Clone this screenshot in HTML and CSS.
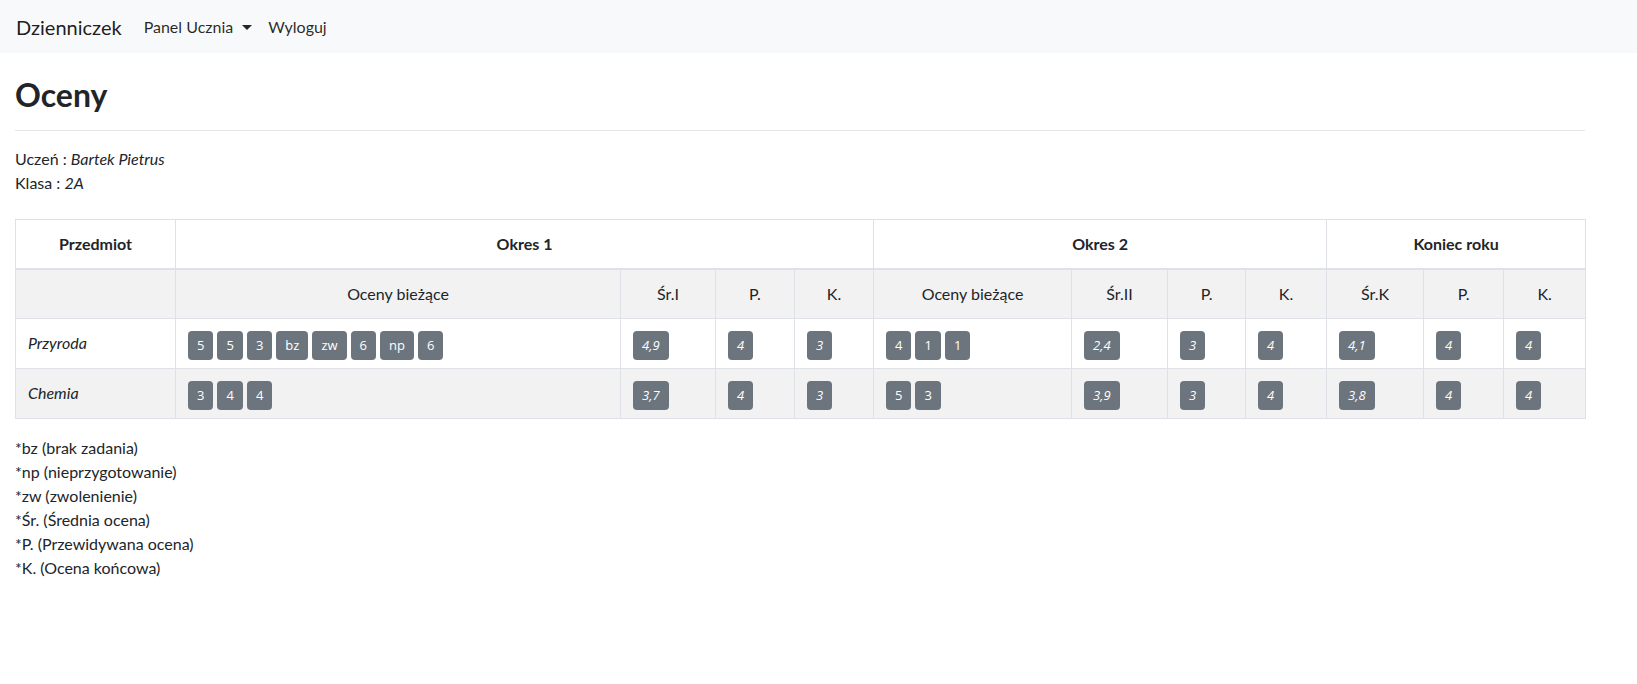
FILE: index.html
```html
<!DOCTYPE html>
<html lang="pl">
<head>
<meta charset="utf-8">
<title>Dzienniczek</title>
<link rel="stylesheet" href="styles.css">
</head>
<body>
<nav class="navbar">
  <a class="brand" href="#">Dzienniczek</a>
  <ul class="nav">
    <li><a class="nav-link dropdown-toggle" href="#">Panel Ucznia</a></li>
    <li><a class="nav-link" href="#">Wyloguj</a></li>
  </ul>
</nav>
<main class="content">
  <h2 class="title">Oceny</h2>
  <hr class="rule">
  <p class="info">Uczeń : <em>Bartek Pietrus</em><br>Klasa : <em>2A</em></p>
  <table class="grades">
    <colgroup>
      <col class="c-subj"><col class="c-cur1"><col class="c-avg1"><col class="c-p1"><col class="c-k1">
      <col class="c-cur2"><col class="c-avg2"><col class="c-p2"><col class="c-k2">
      <col class="c-avgk"><col class="c-pk"><col class="c-kk">
    </colgroup>
    <thead>
      <tr>
        <th>Przedmiot</th>
        <th colspan="4">Okres 1</th>
        <th colspan="4">Okres 2</th>
        <th colspan="3">Koniec roku</th>
      </tr>
    </thead>
    <tbody>
      <tr class="sub">
        <td></td>
        <td>Oceny bieżące</td><td>Śr.I</td><td>P.</td><td>K.</td>
        <td>Oceny bieżące</td><td>Śr.II</td><td>P.</td><td>K.</td>
        <td>Śr.K</td><td>P.</td><td>K.</td>
      </tr>
      <tr>
        <td class="subject">Przyroda</td>
        <td><div class="badges"><span class="badge">5</span><span class="badge">5</span><span class="badge">3</span><span class="badge">bz</span><span class="badge">zw</span><span class="badge">6</span><span class="badge">np</span><span class="badge">6</span></div></td>
        <td><span class="badge it">4,9</span></td>
        <td><span class="badge it">4</span></td>
        <td><span class="badge it">3</span></td>
        <td><div class="badges"><span class="badge">4</span><span class="badge">1</span><span class="badge">1</span></div></td>
        <td><span class="badge it">2,4</span></td>
        <td><span class="badge it">3</span></td>
        <td><span class="badge it">4</span></td>
        <td><span class="badge it">4,1</span></td>
        <td><span class="badge it">4</span></td>
        <td><span class="badge it">4</span></td>
      </tr>
      <tr>
        <td class="subject">Chemia</td>
        <td><div class="badges"><span class="badge">3</span><span class="badge">4</span><span class="badge">4</span></div></td>
        <td><span class="badge it">3,7</span></td>
        <td><span class="badge it">4</span></td>
        <td><span class="badge it">3</span></td>
        <td><div class="badges"><span class="badge">5</span><span class="badge">3</span></div></td>
        <td><span class="badge it">3,9</span></td>
        <td><span class="badge it">3</span></td>
        <td><span class="badge it">4</span></td>
        <td><span class="badge it">3,8</span></td>
        <td><span class="badge it">4</span></td>
        <td><span class="badge it">4</span></td>
      </tr>
    </tbody>
  </table>
  <div class="legend">
    <div>*bz (brak zadania)</div>
    <div>*np (nieprzygotowanie)</div>
    <div>*zw (zwolenienie)</div>
    <div>*Śr. (Średnia ocena)</div>
    <div>*P. (Przewidywana ocena)</div>
    <div>*K. (Ocena końcowa)</div>
  </div>
</main>
</body>
</html>
```

FILE: styles.css
```css
* { box-sizing: border-box; }

body {
  margin: 0;
  font-family: Lato, "Open Sans", "Noto Sans", sans-serif;
  font-size: 16px;
  line-height: 24px;
  color: #212529;
  background: #fff;
}

.navbar {
  display: flex;
  align-items: center;
  height: 53px;
  padding: 0 16px;
  background: #f8f9fa;
}

.brand {
  font-size: 20px;
  line-height: 30px;
  color: rgba(0, 0, 0, 0.9);
  text-decoration: none;
  margin-right: 14px;
}

.nav {
  display: flex;
  list-style: none;
  margin: 0;
  padding: 0;
}

.nav-link {
  display: block;
  padding: 8px;
  color: rgba(0, 0, 0, 0.85);
  text-decoration: none;
}

.dropdown-toggle::after {
  content: "";
  display: inline-block;
  margin-left: 9px;
  vertical-align: 3px;
  border-top: 5px solid;
  border-left: 5px solid transparent;
  border-right: 5px solid transparent;
}

.content {
  padding: 0 52px 0 15px;
}

.title {
  margin: 23px 0 0;
  font-size: 32px;
  line-height: 38px;
  font-weight: 700;
}

.rule {
  margin: 16px 0 16px;
  border: 0;
  border-top: 1px solid rgba(0, 0, 0, 0.1);
}

.info {
  margin: 0 0 24px;
}

.grades {
  width: 100%;
  table-layout: fixed;
  border-collapse: collapse;
}

.c-subj { width: 160px; }
.c-cur1 { width: 445px; }
.c-avg1 { width: 95px; }
.c-p1 { width: 79px; }
.c-k1 { width: 79px; }
.c-cur2 { width: 198px; }
.c-avg2 { width: 96px; }
.c-p2 { width: 78px; }
.c-k2 { width: 81px; }
.c-avgk { width: 97px; }
.c-pk { width: 80px; }
.c-kk { width: 82px; }

.grades th,
.grades td {
  border: 1px solid #dee2e6;
  padding: 12px;
  vertical-align: top;
}

.grades th {
  text-align: center;
  font-weight: 700;
  border-bottom-width: 2px;
}

.grades tbody tr:nth-child(odd) {
  background: #f2f2f2;
}

.grades .sub td {
  text-align: center;
}

.grades tbody tr:not(.sub) td {
  padding: 12px 12px 8px;
}

.subject {
  font-style: italic;
}

.badges {
  display: flex;
  gap: 4px;
}

.badge {
  display: inline-flex;
  align-items: center;
  justify-content: center;
  height: 29px;
  padding: 0 9px;
  font-family: "Open Sans", "Noto Sans", sans-serif;
  font-size: 13px;
  line-height: 13px;
  color: #fff;
  background: #6c757d;
  border-radius: 4px;
}

.badge.it {
  font-style: italic;
}

.legend {
  margin-top: 17px;
}
```
